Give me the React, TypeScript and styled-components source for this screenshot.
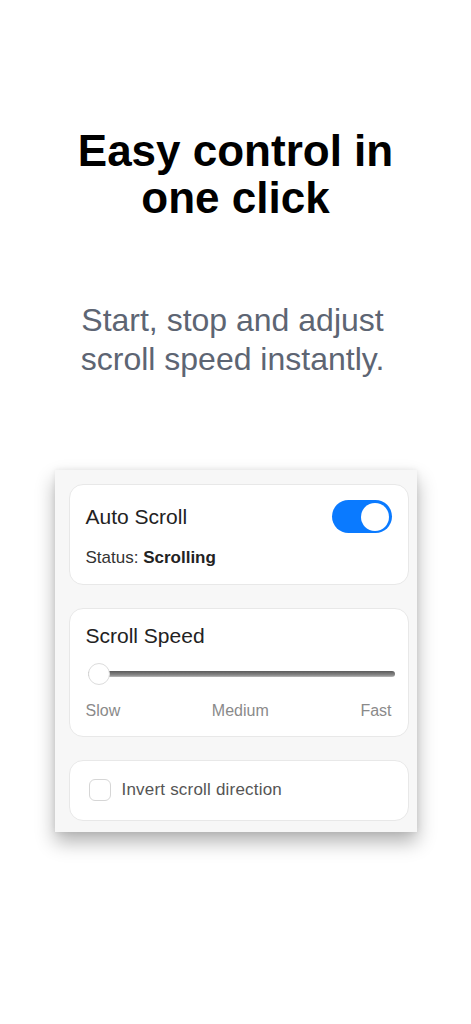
import styled, { createGlobalStyle } from "styled-components";

const GlobalStyle = createGlobalStyle`
  html, body {
    margin: 0;
    padding: 0;
    background: #ffffff;
  }
  body {
    font-family: "Liberation Sans", Arial, Helvetica, sans-serif;
    -webkit-font-smoothing: antialiased;
  }
`;

function App() {
  return (
    <Page>
      <GlobalStyle />
      <Title>
        Easy control in
        <br />
        one click
      </Title>
      <Subtitle>
        Start, stop and adjust
        <br />
        scroll speed instantly.
      </Subtitle>

      <Panel>
        <Card>
          <Row>
            <CardTitle>Auto Scroll</CardTitle>
            <Toggle $on>
              <Knob />
            </Toggle>
          </Row>
          <Status>
            Status: <b>Scrolling</b>
          </Status>
        </Card>

        <Card>
          <CardTitle>Scroll Speed</CardTitle>
          <Slider>
            <Track />
            <Thumb style={{ left: 0 }} />
          </Slider>
          <Ticks>
            <span>Slow</span>
            <span>Medium</span>
            <span>Fast</span>
          </Ticks>
        </Card>

        <Card $compact>
          <CheckRow>
            <CheckBox />
            <CheckLabel>Invert scroll direction</CheckLabel>
          </CheckRow>
        </Card>
      </Panel>
    </Page>
  );
}

export default App;

const Page = styled.div`
  width: 471px;
  min-height: 1024px;
  padding-top: 127px;
  box-sizing: border-box;
  display: flex;
  flex-direction: column;
  align-items: center;
`;

const Title = styled.h1`
  margin: 0;
  font-size: 44px;
  line-height: 47px;
  font-weight: 700;
  color: #000;
  text-align: center;
`;

const Subtitle = styled.p`
  margin: 80px 0 0;
  padding-right: 6px;
  font-size: 32px;
  line-height: 39px;
  font-weight: 400;
  color: #5d6573;
  text-align: center;
`;

const Panel = styled.div`
  margin-top: 91px;
  width: 362px;
  box-sizing: border-box;
  padding: 14px 8px 11px 14px;
  background: #f7f7f7;
  box-shadow: 0 10px 18px rgba(0, 0, 0, 0.3), 0 0 6px rgba(0, 0, 0, 0.08);
  display: flex;
  flex-direction: column;
  gap: 23px;
`;

const Card = styled.div<{ $compact?: boolean }>`
  background: #fff;
  border: 1px solid #e8e8e8;
  border-radius: 14px;
  padding: ${(p) => (p.$compact ? "18px 16px 19px 19px" : "15px 16px 16px")};
  display: flex;
  flex-direction: column;
`;

const Row = styled.div`
  display: flex;
  align-items: center;
  justify-content: space-between;
`;

const CardTitle = styled.div`
  font-size: 21px;
  line-height: 24px;
  color: #222;
`;

const Toggle = styled.div<{ $on?: boolean }>`
  width: 60px;
  height: 33px;
  border-radius: 17px;
  background: ${(p) => (p.$on ? "#0a7aff" : "#ddd")};
  display: flex;
  align-items: center;
  justify-content: ${(p) => (p.$on ? "flex-end" : "flex-start")};
  padding: 0 3px;
  box-sizing: border-box;
`;

const Knob = styled.div`
  width: 28px;
  height: 28px;
  border-radius: 50%;
  background: #fff;
`;

const Status = styled.div`
  margin-top: 15px;
  font-size: 17px;
  line-height: 20px;
  color: #333;

  b {
    font-weight: 700;
    color: #222;
  }
`;

const Slider = styled.div`
  position: relative;
  height: 22px;
  margin: 15px -3px 0 2px;
  display: flex;
  align-items: center;
`;

const Track = styled.div`
  width: 100%;
  height: 6px;
  border-radius: 3px;
  background: linear-gradient(#5a5a5a, #8a8a8a 70%, #bdbdbd);
`;

const Thumb = styled.div`
  position: absolute;
  top: 0;
  width: 22px;
  height: 22px;
  box-sizing: border-box;
  border-radius: 50%;
  background: #fff;
  border: 1px solid #dcdcdc;
`;

const Ticks = styled.div`
  margin-top: 17px;
  display: flex;
  justify-content: space-between;
  font-size: 16px;
  line-height: 18px;
  color: #8a8a8a;
`;

const CheckRow = styled.label`
  display: flex;
  align-items: center;
  gap: 11px;
`;

const CheckBox = styled.span`
  width: 22px;
  height: 22px;
  box-sizing: border-box;
  border: 1px solid #d6d6d6;
  border-radius: 6px;
  background: #fff;
`;

const CheckLabel = styled.span`
  font-size: 17px;
  line-height: 22px;
  letter-spacing: 0.2px;
  color: #555;
`;
